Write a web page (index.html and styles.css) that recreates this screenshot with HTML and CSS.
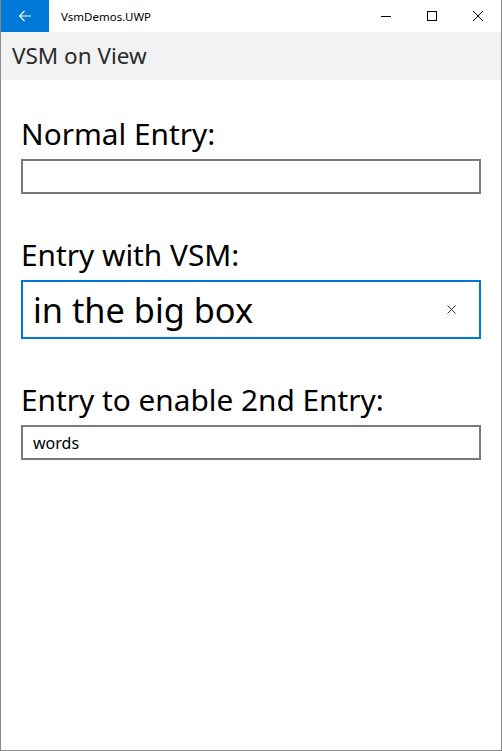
FILE: index.html
```html
<!DOCTYPE html>
<html>
<head>
<meta charset="utf-8">
<link rel="stylesheet" href="styles.css">
</head>
<body>
<div class="window">
  <div class="titlebar">
    <div class="back">
      <svg width="14" height="12" viewBox="0 0 14 12"><path d="M13 6H1.5M6.5 1L1.5 6l5 5" fill="none" stroke="#fff" stroke-width="1.1"/></svg>
    </div>
    <div class="apptitle">VsmDemos.UWP</div>
    <div class="controls">
      <div class="ctl"><svg width="10" height="10" viewBox="0 0 10 10"><path d="M0 5.5h10" stroke="#000" stroke-width="1"/></svg></div>
      <div class="ctl"><svg width="10" height="10" viewBox="0 0 10 10"><rect x="0.5" y="0.5" width="9" height="9" fill="none" stroke="#000" stroke-width="1"/></svg></div>
      <div class="ctl"><svg width="10" height="10" viewBox="0 0 10 10"><path d="M0 0L10 10M10 0L0 10" stroke="#000" stroke-width="1"/></svg></div>
    </div>
  </div>
  <div class="header">VSM on View</div>
  <div class="content">
    <div class="label">Normal Entry:</div>
    <div class="entry"></div>
    <div class="label gap">Entry with VSM:</div>
    <div class="entry big">
      <span>in the big box</span>
      <svg class="clear" width="9" height="9" viewBox="0 0 9 9"><path d="M0.5 0.5L8.5 8.5M8.5 0.5L0.5 8.5" stroke="#333" stroke-width="1"/></svg>
    </div>
    <div class="label gap">Entry to enable 2nd Entry:</div>
    <div class="entry small">words</div>
  </div>
</div>
</body>
</html>
```

FILE: styles.css
```css
html, body {
  margin: 0;
  padding: 0;
  background: #fff;
}
body {
  font-family: "Noto Sans", "Open Sans", sans-serif;
  color: #000;
}
.window {
  width: 502px;
  height: 751px;
  box-sizing: border-box;
  border: 1px solid #8a8a8a;
  border-top: none;
  display: flex;
  flex-direction: column;
  background: #fff;
}
.titlebar {
  height: 32px;
  display: flex;
  align-items: center;
  background: #fff;
}
.back {
  width: 48px;
  height: 32px;
  background: #0078d7;
  display: flex;
  align-items: center;
  justify-content: center;
}
.apptitle {
  margin-left: 12px;
  font-size: 11.5px;
  color: #000;
  flex: 1;
}
.controls {
  display: flex;
  height: 32px;
}
.ctl {
  width: 46px;
  height: 32px;
  display: flex;
  align-items: center;
  justify-content: center;
}
.header {
  height: 48px;
  background: #f2f2f2;
  font-size: 22.5px;
  color: #2b2b2b;
  padding-left: 11px;
  line-height: 48px;
}
.content {
  padding: 34px 20px 0 20px;
  display: flex;
  flex-direction: column;
}
.label {
  font-size: 29.8px;
  line-height: 40px;
  height: 40px;
  margin-bottom: 5px;
}
.label.gap {
  margin-top: 41px;
}
.entry {
  height: 35px;
  box-sizing: border-box;
  border: 2px solid #7a7a7a;
  padding: 0 10px;
  display: flex;
  align-items: center;
}
.entry.big {
  height: 59px;
  border-color: #0078d7;
  font-size: 34.3px;
  justify-content: space-between;
  padding-right: 23px;
}
.entry.small {
  font-size: 16px;
}
.clear {
  display: block;
}
```
